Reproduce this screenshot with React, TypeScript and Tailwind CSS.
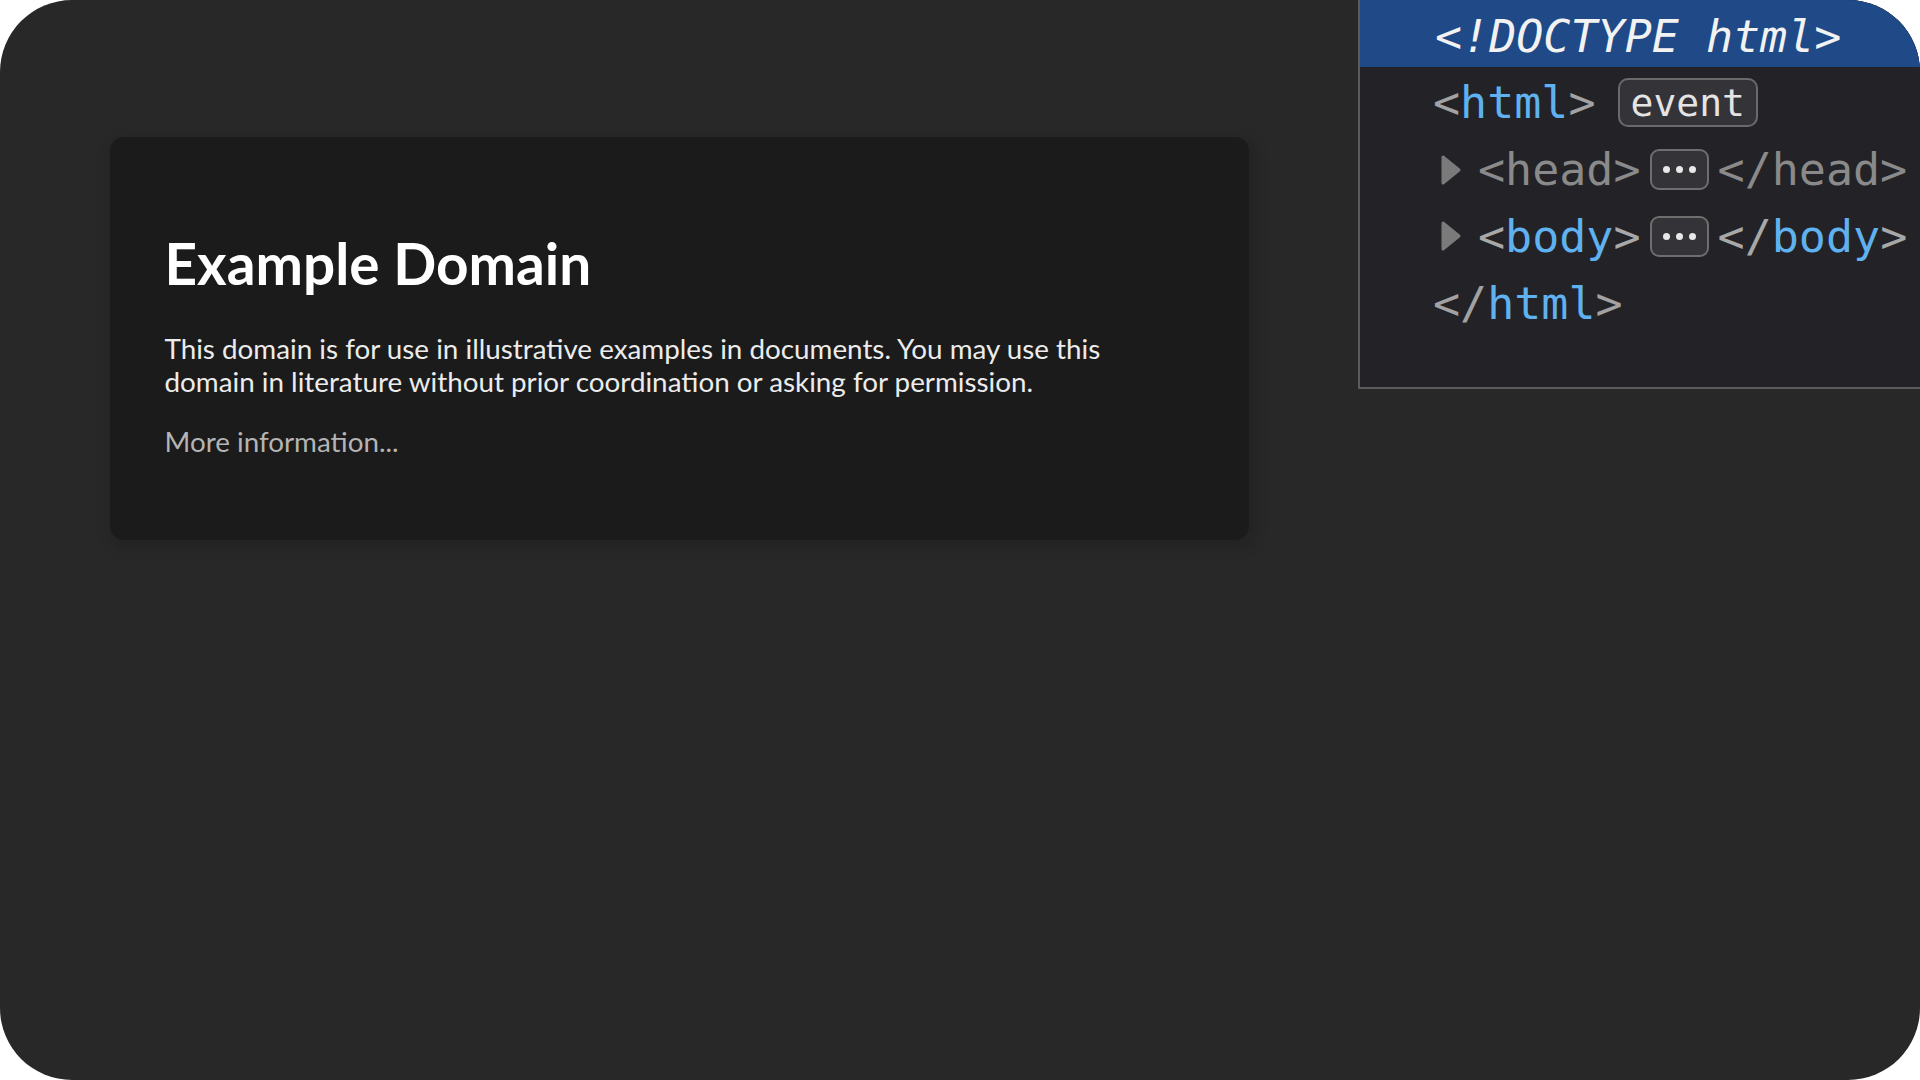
import React from "react";

const mono = { fontFamily: '"DejaVu Sans Mono", "Liberation Mono", monospace' };
const sans = { fontFamily: 'Lato, "Noto Sans", sans-serif' };

function Ellipsis() {
	return (
		<span className="mx-[9px] inline-flex h-[41px] w-[59px] items-center justify-center gap-[6px] rounded-[9px] border-2 border-[#6e6e6e] bg-[#343438]">
			<span className="h-[7px] w-[7px] rounded-full bg-[#e8e8e8]" />
			<span className="h-[7px] w-[7px] rounded-full bg-[#e8e8e8]" />
			<span className="h-[7px] w-[7px] rounded-full bg-[#e8e8e8]" />
		</span>
	);
}

function Caret() {
	return (
		<svg width="22" height="32" viewBox="0 0 22 32" className="mr-[16px] shrink-0">
			<path d="M3 3 L19 16 L3 29 Z" fill="#7a7a7a" stroke="#7a7a7a" strokeWidth="3" strokeLinejoin="round" />
		</svg>
	);
}

export default function App() {
	return (
		<div className="h-screen w-full bg-white">
			<div className="flex h-full w-full overflow-hidden rounded-[72px] bg-[#282828]">
				{/* page preview */}
				<div className="flex-1">
					<div
						className="mx-auto mt-[137px] w-[1139px] rounded-[14px] bg-[#1b1b1b] px-[55px] py-[55px] shadow-[3px_5px_14px_4px_rgba(0,0,0,0.12)]"
						style={sans}
					>
						<h1 className="mt-[38px] mb-[36px] text-[56.7px] font-bold leading-[66px] text-white">
							Example Domain
						</h1>
						<p className="max-w-[970px] text-[27.8px] leading-[33px] text-[#ececec]">
							This domain is for use in illustrative examples in documents. You may use this domain in literature without prior coordination or asking for permission.
						</p>
						<p className="mt-[27px] mb-[27px] text-[27.8px] leading-[33px] text-[#b4b4b4]">
							More information...
						</p>
					</div>
				</div>

				{/* inspector tree */}
				<div className="h-[389px] w-[562px] shrink-0 border-b-2 border-l-2 border-[#5b5b5f] bg-[#232327] text-[45px] leading-none" style={mono}>
					<div className="flex h-[67px] items-center bg-[#1f4a87] pt-[5px] pl-[75px] italic text-[#f2f2f2]">
						&lt;!DOCTYPE html&gt;
					</div>
					<div className="flex h-[67px] items-center pt-[4px] pl-[73px] text-[#a2a2a2]">
						&lt;<span className="text-[#5fb2ef]">html</span>&gt;
						<span className="ml-[22px] flex h-[49px] items-center rounded-[10px] border-2 border-[#6a6a6a] bg-[#343438] px-[11px] text-[38px] text-[#e4e4e4]">
							event
						</span>
					</div>
					<div className="flex h-[67px] items-center pt-[4px] pl-[80px] text-[#8a8a8a]">
						<Caret />
						&lt;head&gt;
						<Ellipsis />
						&lt;/head&gt;
					</div>
					<div className="flex h-[67px] items-center pt-[3px] pl-[80px] text-[#a8a8a8]">
						<Caret />
						&lt;<span className="text-[#5fb2ef]">body</span>&gt;
						<Ellipsis />
						&lt;/<span className="text-[#5fb2ef]">body</span>&gt;
					</div>
					<div className="flex h-[67px] items-center pt-[3px] pl-[73px] text-[#a2a2a2]">
						&lt;/<span className="text-[#5fb2ef]">html</span>&gt;
					</div>
				</div>
			</div>
		</div>
	);
}
